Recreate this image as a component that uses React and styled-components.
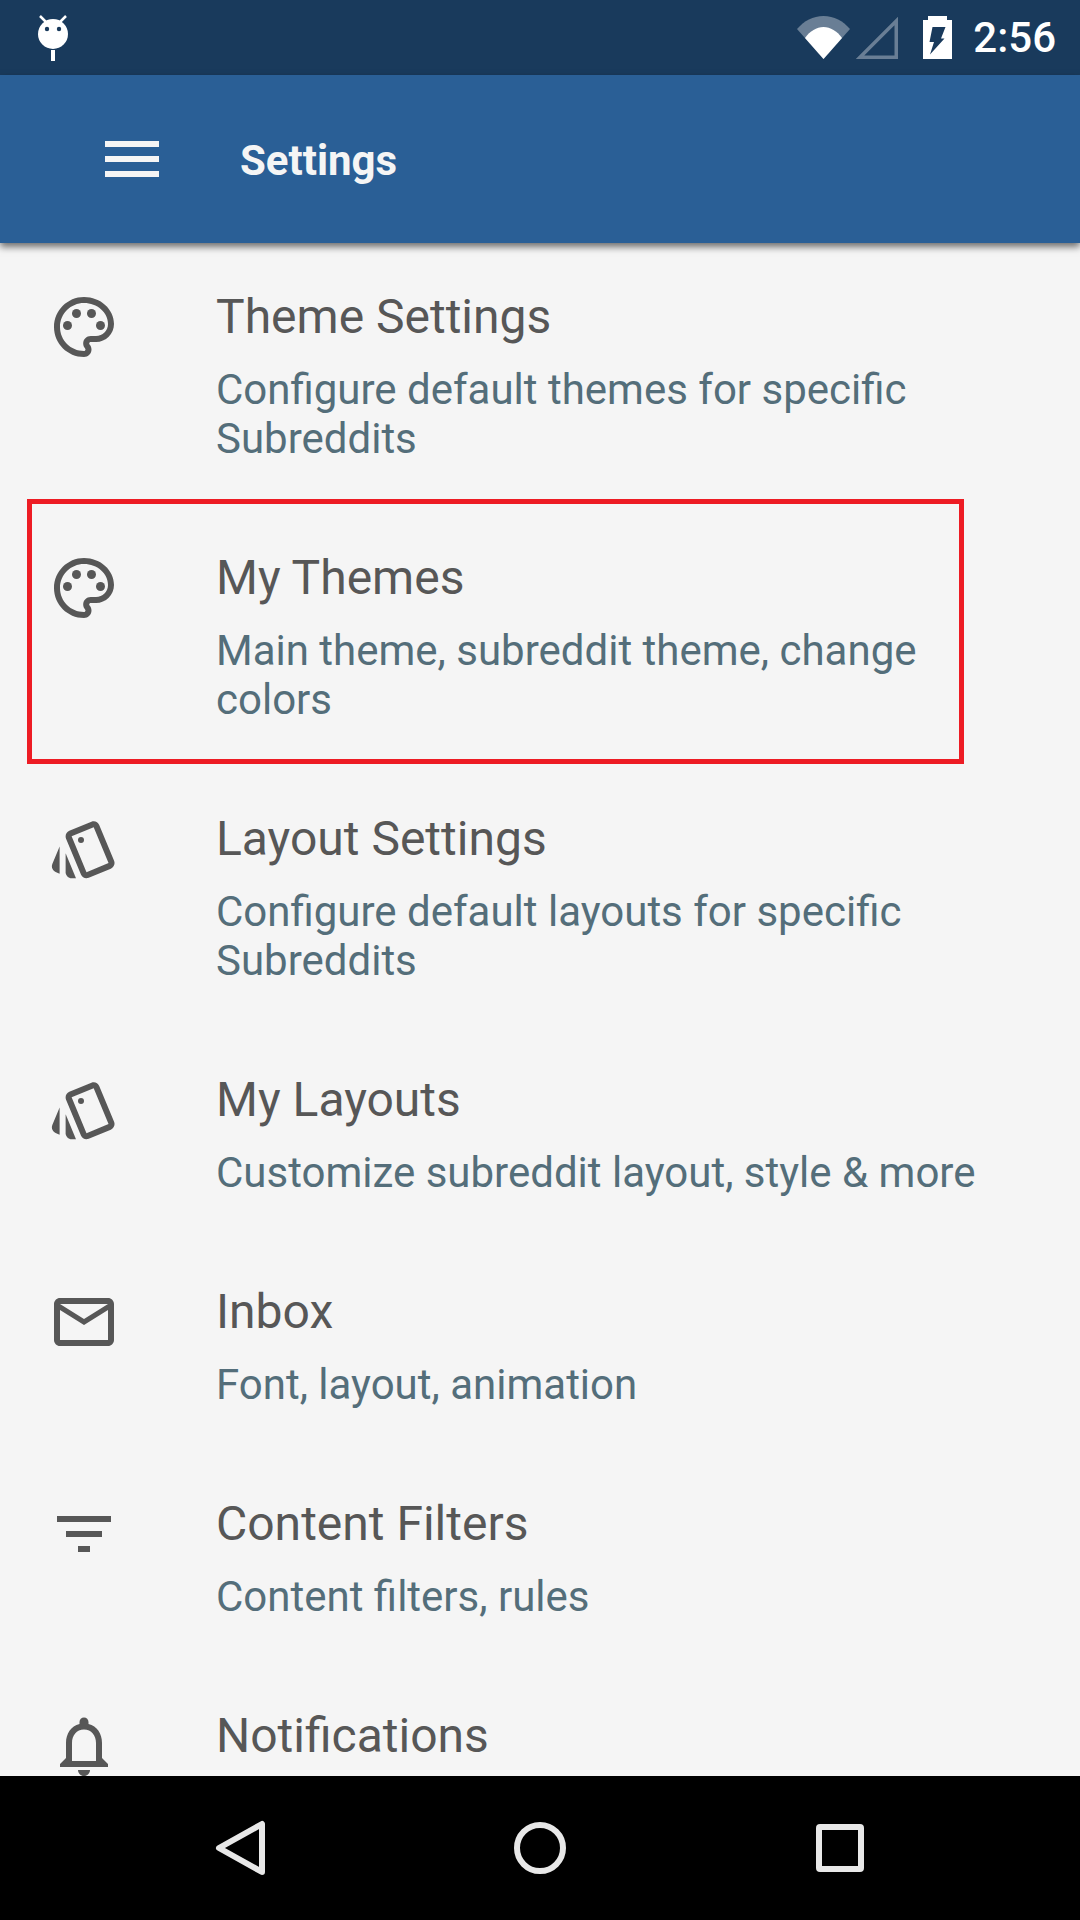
import React from 'react';
import styled, { createGlobalStyle } from 'styled-components';

const Global = createGlobalStyle`
  html, body {
    margin: 0;
    padding: 0;
    background: #f5f5f5;
  }
`

const Screen = styled.div`
  width: 1080px;
  height: 1920px;
  display: flex;
  flex-direction: column;
  overflow: hidden;
  font-family: Roboto, "Liberation Sans", sans-serif;
  background: #f5f5f5;
`

const StatusBar = styled.div`
  height: 75px;
  flex: none;
  display: flex;
  align-items: center;
  padding: 0 24px 0 37px;
  box-sizing: border-box;
  background: #193a5c;
`

const StatusIcons = styled.div`
  margin-left: auto;
  display: flex;
  align-items: center;
`

const Time = styled.span`
  margin-left: 21px;
  font-size: 42px;
  font-weight: 500;
  color: #fff;
`

const Toolbar = styled.header`
  position: relative;
  z-index: 2;
  height: 168px;
  flex: none;
  display: flex;
  align-items: center;
  padding-left: 105px;
  box-sizing: border-box;
  background: #2a5f96;
  box-shadow: 0 4px 7px rgba(0,0,0,.55);
`

const Burger = styled.div`
  width: 54px;
  height: 36px;
  margin-right: 81px;
  display: flex;
  flex-direction: column;
  justify-content: space-between;

  i {
    display: block;
    height: 6px;
    background: #f5f5f5;
  }
`

const Title = styled.h1`
  margin: 4px 0 0;
  font-size: 42px;
  font-weight: 700;
  line-height: 50px;
  color: #f5f5f5;
`

const List = styled.main`
  flex: 1;
  min-height: 0;
  overflow: hidden;
`

const Row = styled.div`
  position: relative;
  display: flex;
  align-items: flex-start;
  padding: 48px 0 0 48px;
  height: ${p => p.$lines === 2 ? 261 : 212}px;
  box-sizing: border-box;

  ${p => p.$marked && `
    &::after {
      content: '';
      position: absolute;
      top: -5px;
      left: 27px;
      width: 937px;
      height: 265px;
      box-sizing: border-box;
      border: 5px solid #ed1c24;
    }
  `}
`

const IconBox = styled.svg`
  width: 72px;
  height: 72px;
  flex: none;
  fill: #575757;
`

const Text = styled.div`
  margin-left: 96px;
  margin-top: -1px;
  width: 800px;
`

const ItemTitle = styled.div`
  font-size: 48px;
  line-height: 54px;
  color: #575757;
`

const ItemSub = styled.div`
  margin-top: 21px;
  max-width: 780px;
  font-size: 42px;
  line-height: 49px;
  color: #546e7a;
`

const NavBar = styled.nav`
  height: 144px;
  flex: none;
  display: flex;
  justify-content: center;
  align-items: center;
  background: #000;
`

const NavSlot = styled.div`
  width: 300px;
  display: flex;
  justify-content: center;
  align-items: center;

  svg {
    display: block;
    fill: none;
    stroke: #e8e8e8;
    stroke-width: 6;
    stroke-linejoin: round;
  }
`

const Palette = () => (
  <IconBox viewBox="0 0 24 24">
    <path d="M12 22C6.49 22 2 17.51 2 12S6.49 2 12 2s10 4.04 10 9c0 3.31-2.69 6-6 6h-1.77c-.28 0-.5.22-.5.5 0 .12.05.23.13.33.41.47.64 1.06.64 1.67 0 1.38-1.12 2.5-2.5 2.5zm0-18c-4.41 0-8 3.59-8 8s3.59 8 8 8c.28 0 .5-.22.5-.5 0-.16-.08-.28-.14-.35-.41-.46-.63-1.05-.63-1.65 0-1.38 1.12-2.5 2.5-2.5H16c2.21 0 4-1.79 4-4 0-3.86-3.59-7-8-7z"/>
    <circle cx="6.5" cy="11.5" r="1.5"/>
    <circle cx="9.5" cy="7.5" r="1.5"/>
    <circle cx="14.5" cy="7.5" r="1.5"/>
    <circle cx="17.5" cy="11.5" r="1.5"/>
  </IconBox>
);

const Cards = () => (
  <IconBox viewBox="0 0 24 24">
    <path fillRule="evenodd" d="M3.87 11.18l-2.43 5.86c-.41 1.02.08 2.19 1.09 2.61l1.34.56v-9.03zm18.16 4.77L17.07 3.98c-.31-.75-1.04-1.21-1.81-1.23-.26 0-.53.04-.79.15L7.1 5.95c-.75.31-1.21 1.03-1.23 1.8-.01.27.04.54.15.8l4.96 11.97c.31.76 1.05 1.22 1.83 1.23.26 0 .52-.05.77-.15l7.36-3.05c1.02-.42 1.51-1.59 1.09-2.6zm-9.2 3.8L7.87 7.79l7.35-3.04h.01l4.95 11.95-7.35 3.05z"/>
    <circle cx="11" cy="9" r="1"/>
    <path d="M5.88 19.75c0 1.1.9 2 2 2h1.45l-3.45-8.34v6.34z"/>
  </IconBox>
);

const Mail = () => (
  <IconBox viewBox="0 0 24 24">
    <path d="M22 6c0-1.1-.9-2-2-2H4c-1.1 0-2 .9-2 2v12c0 1.1.9 2 2 2h16c1.1 0 2-.9 2-2V6zm-2 0l-8 5-8-5h16zm0 12H4V8l8 5 8-5v10z"/>
  </IconBox>
);

const Filter = () => (
  <IconBox viewBox="0 0 24 24">
    <path d="M10 18h4v-2h-4v2zM3 6v2h18V6H3zm3 7h12v-2H6v2z"/>
  </IconBox>
);

const Bell = () => (
  <IconBox viewBox="0 0 24 24">
    <path d="M12 22c1.1 0 2-.9 2-2h-4c0 1.1.9 2 2 2zm6-6v-5c0-3.07-1.63-5.64-4.5-6.32V4c0-.83-.67-1.5-1.5-1.5s-1.5.67-1.5 1.5v.68C7.64 5.36 6 7.92 6 11v5l-2 2v1h16v-1l-2-2zm-2 1H8v-6c0-2.48 1.51-4.5 4-4.5s4 2.02 4 4.5v6z"/>
  </IconBox>
);

const Robot = () => (
  <svg width="32" height="46" viewBox="0 0 32 46">
    <path d="M3 1l6 6M29 1l-6 6" stroke="#fff" strokeWidth="2.500"/>
    <circle cx="16" cy="19" r="15" fill="#fff"/>
    <circle cx="10" cy="14" r="2.200" fill="#193a5c"/>
    <circle cx="22" cy="14" r="2.200" fill="#193a5c"/>
    <rect x="14" y="35" width="4" height="11" fill="#fff"/>
  </svg>
);

const Wifi = () => (
  <svg width="53" height="43" viewBox="0 0 53 43">
    <path d="M0 13C7 5 16 0 26.500 0S46 5 53 13L26.500 43z" fill="#fff" fillOpacity=".35"/>
    <path d="M8 22C13 15 19.500 11 26.500 11S40 15 45 22L26.500 43z" fill="#fff"/>
  </svg>
);

const Signal = () => (
  <svg width="42" height="42" viewBox="0 0 42 42" style={{ marginLeft: 6 }}>
    <path d="M4 40.250L40.250 4V40.250z" fill="none" stroke="#fff" strokeOpacity=".35" strokeWidth="3.500"/>
  </svg>
);

const Battery = () => (
  <svg width="29" height="43" viewBox="0 0 29 43" style={{ marginLeft: 25 }}>
    <path fillRule="evenodd" fill="#fff" d="M5 0h19v4h5v39H0V4h5zM9.500 11H22.500L18 22.500h3.500L7 38.500 11 26H6.500z"/>
  </svg>
);

const items = [
  { icon: <Palette />, title: 'Theme Settings', sub: 'Configure default themes for specific Subreddits', lines: 2 },
  { icon: <Palette />, title: 'My Themes', sub: 'Main theme, subreddit theme, change colors', lines: 2, marked: true },
  { icon: <Cards />, title: 'Layout Settings', sub: 'Configure default layouts for specific Subreddits', lines: 2 },
  { icon: <Cards />, title: 'My Layouts', sub: 'Customize subreddit layout, style & more', lines: 1 },
  { icon: <Mail />, title: 'Inbox', sub: 'Font, layout, animation', lines: 1 },
  { icon: <Filter />, title: 'Content Filters', sub: 'Content filters, rules', lines: 1 },
  { icon: <Bell />, title: 'Notifications', sub: '', lines: 1 },
];

export default function App() {
  return (
    <Screen>
      <Global />
      <StatusBar>
        <Robot />
        <StatusIcons>
          <Wifi />
          <Signal />
          <Battery />
          <Time>2:56</Time>
        </StatusIcons>
      </StatusBar>
      <Toolbar>
        <Burger><i /><i /><i /></Burger>
        <Title>Settings</Title>
      </Toolbar>
      <List>
        {items.map(item => (
          <Row key={item.title} $lines={item.lines} $marked={item.marked}>
            {item.icon}
            <Text>
              <ItemTitle>{item.title}</ItemTitle>
              {item.sub && <ItemSub>{item.sub}</ItemSub>}
            </Text>
          </Row>
        ))}
      </List>
      <NavBar>
        <NavSlot>
          <svg width="52" height="56" viewBox="0 0 52 56"><path d="M48 4v48L5 28z"/></svg>
        </NavSlot>
        <NavSlot>
          <svg width="52" height="52" viewBox="0 0 52 52"><circle cx="26" cy="26" r="23"/></svg>
        </NavSlot>
        <NavSlot>
          <svg width="48" height="48" viewBox="0 0 48 48"><rect x="3" y="3" width="42" height="42" rx="1"/></svg>
        </NavSlot>
      </NavBar>
    </Screen>
  );
}
